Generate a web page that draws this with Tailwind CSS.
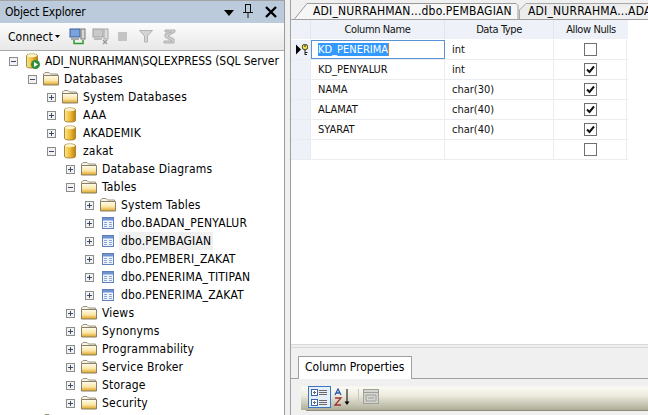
<!DOCTYPE html>
<html>
<head>
<meta charset="utf-8">
<title>Object Explorer</title>
<script src="https://cdn.jsdelivr.net/npm/@tailwindcss/browser@4"></script>
</head>
<body class="w-[648px] h-[415px] overflow-hidden bg-[#f0f0f0] font-['DejaVu_Sans_Condensed','DejaVu_Sans',sans-serif] [font-stretch:condensed] text-[12px] text-black">

<svg class="absolute w-0 h-0">
  <defs>
    <linearGradient id="fold" x1="0" y1="0" x2="0" y2="1"><stop offset="0" stop-color="#fffdf0"/><stop offset=".55" stop-color="#fbe6a6"/><stop offset="1" stop-color="#dca01e"/></linearGradient>
    <linearGradient id="cyl" x1="0" y1="0" x2="1" y2="0"><stop offset="0" stop-color="#f8e69a"/><stop offset=".5" stop-color="#f2bd34"/><stop offset="1" stop-color="#b97f12"/></linearGradient>
  </defs>
  <symbol id="folder" viewBox="0 0 16 14">
    <path d="M.5 4V2L2 .5h4L7.500 2h7v3" fill="#f6f3e6" stroke="#9c9480"/>
    <path d="M.5 3.500h15v9.500H.5z" fill="url(#fold)" stroke="#8a8068"/>
  </symbol>
  <symbol id="db" viewBox="0 0 12 16">
    <path d="M.5 2.500C.5.500 11.500.500 11.500 2.500v11c0 2-11 2-11 0z" fill="url(#cyl)" stroke="#a98a3a"/>
    <ellipse cx="6" cy="2.600" rx="5" ry="1.600" fill="#fdf3cf"/>
  </symbol>
  <symbol id="table" viewBox="0 0 12 12">
    <rect x=".5" y=".5" width="11" height="11" fill="#eef3fb" stroke="#5f80b8"/>
    <rect x="1" y="1" width="10" height="2.500" fill="#6f93cf"/>
    <path d="M2 5.500h3M7 5.500h3M2 7.500h3M7 7.500h3M2 9.500h3M7 9.500h3" stroke="#8fa6cc"/>
  </symbol>
  <symbol id="plus" viewBox="0 0 9 9">
    <rect x=".5" y=".5" width="8" height="8" fill="#f2f2f2" stroke="#8c8c8c"/>
    <path d="M2 4.500h5M4.500 2v5" stroke="#3b4a6b"/>
  </symbol>
  <symbol id="minus" viewBox="0 0 9 9">
    <rect x=".5" y=".5" width="8" height="8" fill="#f2f2f2" stroke="#8c8c8c"/>
    <path d="M2 4.500h5" stroke="#3b4a6b"/>
  </symbol>
  <symbol id="check" viewBox="0 0 13 13">
    <rect x=".5" y=".5" width="12" height="12" fill="#fff" stroke="#707070"/>
    <path d="M3 6.500l2.500 2.500L10 3.500" fill="none" stroke="#111" stroke-width="2"/>
  </symbol>
  <symbol id="uncheck" viewBox="0 0 13 13">
    <rect x=".5" y=".5" width="12" height="12" fill="#fff" stroke="#707070"/>
  </symbol>
</svg>

<div class="flex h-[415px]">

  <!-- object explorer -->
  <div class="w-[285px] h-[415px] shrink-0 flex flex-col bg-white border-r border-[#9a9a9a] overflow-hidden">
    <div class="h-[23px] shrink-0 flex items-center pl-[5px] pr-[5px] bg-[#bccbdc] border-t border-[#a3a3a3]">
      <span class="grow tracking-[-0.2px]">Object Explorer</span>
      <svg class="w-[10px] h-[6px] mr-[8px] mt-[2px]" viewBox="0 0 10 6"><path d="M0 0h10L5 6z" fill="#000"/></svg>
      <svg class="w-[12px] h-[15px] mr-[11px] mb-[3px]" viewBox="0 0 12 15"><path d="M3.500 1v8M8.500 1v8M1 9.500h10M6 9v6M3.500 1.500h5" fill="none" stroke="#111"/></svg>
      <svg class="w-[12px] h-[12px] mr-[2px]" viewBox="0 0 12 12"><path d="M1 1l10 10M11 1L1 11" stroke="#000" stroke-width="2.400"/></svg>
    </div>
    <div class="h-[27px] shrink-0 flex items-center pl-[8px] bg-gradient-to-b from-[#fcfcfc] to-[#e8e8e8]">
      <span class="w-[47px]">Connect</span>
      <svg class="w-[5px] h-[3px] mr-[9px]" viewBox="0 0 5 3"><path d="M0 0h5L2.500 3z" fill="#000"/></svg>
      <svg class="w-[17px] h-[17px] mr-[6px]" viewBox="0 0 17 17"><rect x="1" y="1" width="10" height="8" fill="#7aa3dc" stroke="#3c5f99"/><rect x="12" y="1" width="4" height="10" fill="#d6d6d6" stroke="#7a7a7a"/><rect x="2" y="10" width="8" height="2" fill="#aaa"/><path d="M5 12v3.500h9V12" fill="none" stroke="#2f9a2f" stroke-width="1.500"/></svg>
      <svg class="w-[17px] h-[17px] mr-[9px]" viewBox="0 0 17 17"><rect x="1" y="1" width="10" height="8" fill="#c9c9c9" stroke="#a0a0a0"/><rect x="12" y="1" width="4" height="10" fill="#dcdcdc" stroke="#aaa"/><rect x="2" y="10" width="8" height="2" fill="#bbb"/><path d="M11 12l4 4M15 12l-4 4" stroke="#999" stroke-width="1.500"/></svg>
      <span class="w-[9px] h-[9px] bg-[#c4c4c4] mr-[12px]"></span>
      <svg class="w-[14px] h-[13px] mr-[9px]" viewBox="0 0 14 13"><path d="M.5.500h13L8.500 6v6h-3V6z" fill="#d4d4d4" stroke="#b4b4b4"/></svg>
      <svg class="w-[15px] h-[16px]" viewBox="0 0 15 16"><path d="M3 1h10v2L6 7l6 3v4H2v-2h8L3 8V5l7-2H3z" fill="#cfcfcf" stroke="#b0b0b0"/></svg>
    </div>
    <div class="h-px shrink-0 bg-[#a8a8a8]"></div>

    <ul class="pt-[1px] leading-[18px] whitespace-nowrap tracking-[0.2px]">
      <li class="h-[18px] flex items-center pl-[9px]">
        <svg class="w-[9px] h-[9px] shrink-0"><use href="#minus"/></svg>
        <span class="relative shrink-0 w-[12px] h-[16px] ml-[8px]"><svg class="w-[12px] h-[16px]"><use href="#db"/></svg><svg class="absolute left-[5px] top-[7px] w-[9px] h-[9px]" viewBox="0 0 9 9"><circle cx="4.500" cy="4.500" r="4.500" fill="#2f8f3c"/><path d="M3 2l4 2.500L3 7z" fill="#fff"/></svg></span>
        <span class="ml-[7px] tracking-[-0.08px]">ADI_NURRAHMAN\SQLEXPRESS (SQL Server</span>
      </li>
      <li class="h-[18px] flex items-center pl-[28px]"><svg class="w-[9px] h-[9px]"><use href="#minus"/></svg><svg class="w-[16px] h-[14px] ml-[6px]"><use href="#folder"/></svg><span class="ml-[5px]">Databases</span></li>
      <li class="h-[18px] flex items-center pl-[47px]"><svg class="w-[9px] h-[9px]"><use href="#plus"/></svg><svg class="w-[16px] h-[14px] ml-[6px]"><use href="#folder"/></svg><span class="ml-[5px]">System Databases</span></li>
      <li class="h-[18px] flex items-center pl-[47px]"><svg class="w-[9px] h-[9px]"><use href="#plus"/></svg><svg class="w-[12px] h-[16px] ml-[8px]"><use href="#db"/></svg><span class="ml-[7px]">AAA</span></li>
      <li class="h-[18px] flex items-center pl-[47px]"><svg class="w-[9px] h-[9px]"><use href="#plus"/></svg><svg class="w-[12px] h-[16px] ml-[8px]"><use href="#db"/></svg><span class="ml-[7px]">AKADEMIK</span></li>
      <li class="h-[18px] flex items-center pl-[47px]"><svg class="w-[9px] h-[9px]"><use href="#minus"/></svg><svg class="w-[12px] h-[16px] ml-[8px]"><use href="#db"/></svg><span class="ml-[7px]">zakat</span></li>
      <li class="h-[18px] flex items-center pl-[66px]"><svg class="w-[9px] h-[9px]"><use href="#plus"/></svg><svg class="w-[16px] h-[14px] ml-[6px]"><use href="#folder"/></svg><span class="ml-[5px]">Database Diagrams</span></li>
      <li class="h-[18px] flex items-center pl-[66px]"><svg class="w-[9px] h-[9px]"><use href="#minus"/></svg><svg class="w-[16px] h-[14px] ml-[6px]"><use href="#folder"/></svg><span class="ml-[5px]">Tables</span></li>
      <li class="h-[18px] flex items-center pl-[85px]"><svg class="w-[9px] h-[9px]"><use href="#plus"/></svg><svg class="w-[16px] h-[14px] ml-[6px]"><use href="#folder"/></svg><span class="ml-[5px]">System Tables</span></li>
      <li class="h-[18px] flex items-center pl-[85px]"><svg class="w-[9px] h-[9px]"><use href="#plus"/></svg><svg class="w-[12px] h-[12px] ml-[8px]"><use href="#table"/></svg><span class="ml-[7px]">dbo.BADAN_PENYALUR</span></li>
      <li class="h-[18px] flex items-center pl-[85px]"><svg class="w-[9px] h-[9px]"><use href="#plus"/></svg><svg class="w-[12px] h-[12px] ml-[8px]"><use href="#table"/></svg><span class="ml-[5px] px-[2px] bg-[#f0f0f0]">dbo.PEMBAGIAN</span></li>
      <li class="h-[18px] flex items-center pl-[85px]"><svg class="w-[9px] h-[9px]"><use href="#plus"/></svg><svg class="w-[12px] h-[12px] ml-[8px]"><use href="#table"/></svg><span class="ml-[7px]">dbo.PEMBERI_ZAKAT</span></li>
      <li class="h-[18px] flex items-center pl-[85px]"><svg class="w-[9px] h-[9px]"><use href="#plus"/></svg><svg class="w-[12px] h-[12px] ml-[8px]"><use href="#table"/></svg><span class="ml-[7px]">dbo.PENERIMA_TITIPAN</span></li>
      <li class="h-[18px] flex items-center pl-[85px]"><svg class="w-[9px] h-[9px]"><use href="#plus"/></svg><svg class="w-[12px] h-[12px] ml-[8px]"><use href="#table"/></svg><span class="ml-[7px]">dbo.PENERIMA_ZAKAT</span></li>
      <li class="h-[18px] flex items-center pl-[66px]"><svg class="w-[9px] h-[9px]"><use href="#plus"/></svg><svg class="w-[16px] h-[14px] ml-[6px]"><use href="#folder"/></svg><span class="ml-[5px]">Views</span></li>
      <li class="h-[18px] flex items-center pl-[66px]"><svg class="w-[9px] h-[9px]"><use href="#plus"/></svg><svg class="w-[16px] h-[14px] ml-[6px]"><use href="#folder"/></svg><span class="ml-[5px]">Synonyms</span></li>
      <li class="h-[18px] flex items-center pl-[66px]"><svg class="w-[9px] h-[9px]"><use href="#plus"/></svg><svg class="w-[16px] h-[14px] ml-[6px]"><use href="#folder"/></svg><span class="ml-[5px]">Programmability</span></li>
      <li class="h-[18px] flex items-center pl-[66px]"><svg class="w-[9px] h-[9px]"><use href="#plus"/></svg><svg class="w-[16px] h-[14px] ml-[6px]"><use href="#folder"/></svg><span class="ml-[5px]">Service Broker</span></li>
      <li class="h-[18px] flex items-center pl-[66px]"><svg class="w-[9px] h-[9px]"><use href="#plus"/></svg><svg class="w-[16px] h-[14px] ml-[6px]"><use href="#folder"/></svg><span class="ml-[5px]">Storage</span></li>
      <li class="h-[18px] flex items-center pl-[66px]"><svg class="w-[9px] h-[9px]"><use href="#plus"/></svg><svg class="w-[16px] h-[14px] ml-[6px]"><use href="#folder"/></svg><span class="ml-[5px]">Security</span></li>
      <li class="h-[18px] flex items-center pl-[28px]"><svg class="w-[9px] h-[9px]"><use href="#plus"/></svg><svg class="w-[16px] h-[14px] ml-[6px]"><use href="#folder"/></svg></li>
    </ul>
  </div>

  <!-- gap between panes -->
  <div class="w-[6px] shrink-0 bg-[#f0f0f0] border-r border-[#a0a0a0]"></div>

  <!-- table designer -->
  <div class="w-[357px] flex flex-col min-w-0 h-[415px] overflow-hidden">
    <div class="h-[20px] shrink-0 flex items-end border-b border-[#a0a0a0] bg-[#f0f0f0] overflow-hidden whitespace-nowrap">
      <div class="relative h-[16px] w-[228px] shrink-0 pl-[22px] leading-[16px] tracking-[0.2px]">
        <svg class="absolute left-0 top-0 w-[228px] h-[16px]" viewBox="0 0 228 16"><path d="M3.500 16L16 .5h209l2 2V16" fill="#f6f6f6" stroke="#9a9a9a"/></svg>
        <span class="relative">ADI_NURRAHMAN...dbo.PEMBAGIAN</span>
      </div>
      <div class="relative h-[16px] w-[129px] shrink-0 pl-[9px] leading-[16px] overflow-hidden tracking-[0.2px]">
        <svg class="absolute left-0 top-0 w-[129px] h-[16px]" viewBox="0 0 129 16"><path d="M.5 16V7L7 .5h122" fill="#ececec" stroke="#a8a8a8"/></svg>
        <span class="relative">ADI_NURRAHMA...ADA</span>
      </div>
    </div>

    <div class="h-[324px] shrink-0 bg-white">
      <div class="w-[337px] text-[#111] text-[11px]">
        <div class="flex h-[20px] bg-white border-b border-white leading-[19px] text-center tracking-[-0.4px]">
          <div class="w-[20px] bg-[#eef2f8] border-r border-[#dfe6f0]"></div>
          <div class="w-[134px] bg-[#eef2f8] border-r border-[#dfe6f0]">Column Name</div>
          <div class="w-[109px] bg-[#eef2f8] border-r border-[#dfe6f0]">Data Type</div>
          <div class="w-[74px] bg-[#eef2f8]">Allow Nulls</div>
        </div>
        <div class="flex h-[20px] border-b border-[#e9edf2] leading-[19px]">
          <div class="w-[20px] bg-[#eef2f8] border-r border-[#e9edf2] flex items-center pl-[5px]">
            <svg class="w-[12px] h-[11px]" viewBox="0 0 12 11"><path d="M0 .5l5 5-5 5z" fill="#000"/><circle cx="9" cy="3" r="2.800" fill="#f5e33c" stroke="#222" stroke-width=".8"/><path d="M9 5.500V11M9 8.500h2.500M9 10.500h2" stroke="#222"/><path d="M8 2h2" stroke="#222"/></svg>
          </div>
          <div class="w-[134px] border border-[#5b94d6] pl-[6px] leading-[17px]"><span class="bg-[#3399ff] text-white border-r border-[#d08040]">KD_PENERIMA</span></div>
          <div class="w-[109px] border-r border-[#e9edf2] pl-[7px]">int</div>
          <div class="w-[73px] border-r border-[#e9edf2] flex items-center justify-center"><svg class="w-[13px] h-[13px]"><use href="#uncheck"/></svg></div>
        </div>
        <div class="flex h-[20px] border-b border-[#e9edf2] leading-[19px]">
          <div class="w-[20px] bg-[#eef2f8] border-r border-[#e9edf2]"></div>
          <div class="w-[134px] border-r border-[#e9edf2] pl-[7px]">KD_PENYALUR</div>
          <div class="w-[109px] border-r border-[#e9edf2] pl-[7px]">int</div>
          <div class="w-[73px] border-r border-[#e9edf2] flex items-center justify-center"><svg class="w-[13px] h-[13px]"><use href="#check"/></svg></div>
        </div>
        <div class="flex h-[20px] border-b border-[#e9edf2] leading-[19px]">
          <div class="w-[20px] bg-[#eef2f8] border-r border-[#e9edf2]"></div>
          <div class="w-[134px] border-r border-[#e9edf2] pl-[7px]">NAMA</div>
          <div class="w-[109px] border-r border-[#e9edf2] pl-[7px]">char(30)</div>
          <div class="w-[73px] border-r border-[#e9edf2] flex items-center justify-center"><svg class="w-[13px] h-[13px]"><use href="#check"/></svg></div>
        </div>
        <div class="flex h-[20px] border-b border-[#e9edf2] leading-[19px]">
          <div class="w-[20px] bg-[#eef2f8] border-r border-[#e9edf2]"></div>
          <div class="w-[134px] border-r border-[#e9edf2] pl-[7px]">ALAMAT</div>
          <div class="w-[109px] border-r border-[#e9edf2] pl-[7px]">char(40)</div>
          <div class="w-[73px] border-r border-[#e9edf2] flex items-center justify-center"><svg class="w-[13px] h-[13px]"><use href="#check"/></svg></div>
        </div>
        <div class="flex h-[20px] border-b border-[#e9edf2] leading-[19px]">
          <div class="w-[20px] bg-[#eef2f8] border-r border-[#e9edf2]"></div>
          <div class="w-[134px] border-r border-[#e9edf2] pl-[7px]">SYARAT</div>
          <div class="w-[109px] border-r border-[#e9edf2] pl-[7px]">char(40)</div>
          <div class="w-[73px] border-r border-[#e9edf2] flex items-center justify-center"><svg class="w-[13px] h-[13px]"><use href="#check"/></svg></div>
        </div>
        <div class="flex h-[20px] border-b border-[#e9edf2]">
          <div class="w-[20px] bg-[#eef2f8] border-r border-[#e9edf2]"></div>
          <div class="w-[134px] border-r border-[#e9edf2]"></div>
          <div class="w-[109px] border-r border-[#e9edf2]"></div>
          <div class="w-[73px] border-r border-[#e9edf2] flex items-center justify-center"><svg class="w-[13px] h-[13px]"><use href="#uncheck"/></svg></div>
        </div>
      </div>
    </div>

    <!-- splitter and column properties -->
    <div class="h-[4px] shrink-0 bg-[#f0f0f0] border-y border-[#d8d8d8]"></div>
    <div class="grow flex flex-col bg-[#f0f0f0] pt-[8px]">
      <div class="h-[23px] shrink-0 flex border-b border-[#a0a0a0] pl-[7px]">
        <div class="h-[23px] w-[114px] pl-[6px] leading-[21px] bg-white border border-b-0 border-[#a0a0a0]">Column Properties</div>
      </div>
      <div class="ml-[10px] mt-[2px] h-[30px] shrink-0 flex flex-col bg-[#f0f0f0]">
        <div class="h-[29px] pt-[5px] flex items-start pl-[7px] bg-[linear-gradient(#f0f0f0_5px,#fbfbf4_6px,#ecebdd_50%,#aeae98)]">
          <div class="w-[23px] h-[22px] border border-[#3b78c4] bg-[#e6eef8] flex items-center justify-center">
            <svg class="w-[17px] h-[17px]" viewBox="0 0 17 17"><rect x=".5" y=".5" width="6" height="6" fill="#fff" stroke="#3a66a8"/><rect x=".5" y="10.500" width="6" height="6" fill="#fff" stroke="#3a66a8"/><path d="M2 3.500h3M3.500 2v3M2 13.500h3M3.500 12v3M8 1.500h8M8 3.500h8M8 5.500h8M8 11.500h8M8 13.500h8M8 15.500h8" stroke="#6a6a6a"/></svg>
          </div>
          <svg class="w-[17px] h-[18px] ml-[3px] mt-[2px]" viewBox="0 0 17 18"><path d="M1 7l3-6 3 6M2 5h4" fill="none" stroke="#2f5bb0" stroke-width="1.300"/><path d="M1 10h6L1 17h6" fill="none" stroke="#a03030" stroke-width="1.300"/><path d="M13 1v14" stroke="#000"/><path d="M10.500 13.500h5L13 17z" fill="#000"/></svg>
          <div class="w-px h-[17px] bg-[#c8c8c0] ml-[7px] mt-[3px]"></div>
          <svg class="w-[16px] h-[15px] ml-[4px] mt-[3px]" viewBox="0 0 16 15"><rect x=".5" y=".5" width="15" height="14" fill="#d4d4d0" stroke="#a0a09a"/><path d="M.5 3.500h15M3 6h10v6H3zM5 9h6" fill="none" stroke="#a0a09a"/></svg>
        </div>
        <div class="h-px ml-[5px] bg-[#8c8c80]"></div>
      </div>
    </div>
  </div>
</div>
</body>
</html>
